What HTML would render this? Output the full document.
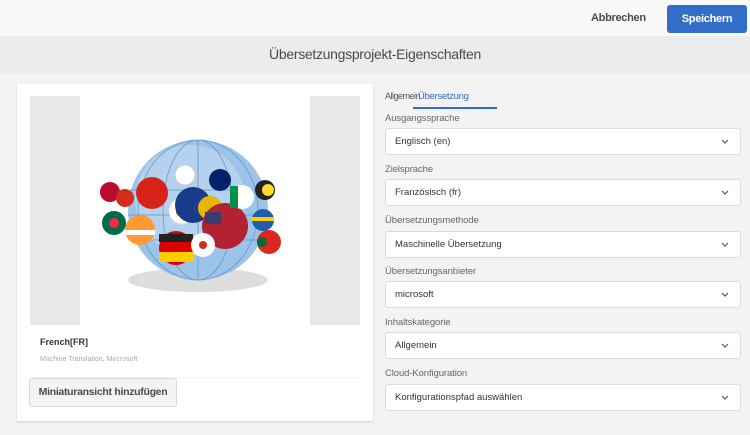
<!DOCTYPE html>
<html><head><meta charset="utf-8"><style>
*{box-sizing:border-box;margin:0;padding:0}
body{width:750px;height:435px;overflow:hidden;background:#f3f3f3;font-family:"Liberation Sans",sans-serif;position:relative}
.top{position:absolute;left:0;top:0;width:750px;height:36px;background:#f9f9f9}
.cancel{position:absolute;left:591px;top:12px;font-size:11px;color:#4b4b4b;font-weight:bold;letter-spacing:-0.3px}
.save{position:absolute;left:667px;top:5px;width:80px;height:28px;background:#326ec8;border-radius:3px;color:#fff;font-size:11px;font-weight:bold;text-align:center;line-height:28px;letter-spacing:-0.3px}
.title{position:absolute;left:0;top:36px;width:750px;height:37px;background:#ececec;text-align:center;line-height:37px;font-size:14px;color:#4b4b4b;letter-spacing:-0.3px}
.card{position:absolute;left:17px;top:84px;width:356px;height:337px;background:#fff;box-shadow:0 1px 2px rgba(0,0,0,.15)}
.img{position:absolute;left:30px;top:96px;width:330px;height:229px;background:#e8e8e8}
.imgw{position:absolute;left:80px;top:96px;width:230px;height:229px;background:#fff}
.info{position:absolute;left:30px;top:325px;width:330px;height:52px;background:#fff;box-shadow:0 1px 1px rgba(0,0,0,.06)}
.fr{position:absolute;left:40px;top:337px;font-size:9px;font-weight:bold;color:#333}
.mt{position:absolute;left:40px;top:356px;font-size:7px;color:#aaa}
.btn{position:absolute;left:29px;top:378px;width:148px;height:29px;background:#f4f4f4;border:1px solid #d8d8d8;border-radius:3px;font-size:10.5px;font-weight:bold;color:#4b4b4b;line-height:27px;text-align:center;letter-spacing:-0.3px}
.tab{position:absolute;top:91px;font-size:9.5px;color:#555;white-space:nowrap}
.ul{position:absolute;left:413px;top:107px;width:84px;height:2px;background:#326ec8}
.lbl{position:absolute;left:385px;font-size:9.5px;color:#666;letter-spacing:-0.1px}
.sel{position:absolute;left:385px;width:356px;height:27px;background:#fff;border:1px solid #dcdcdc;border-radius:3px;font-size:9.5px;color:#333;padding-left:9px;line-height:26px}
.sel svg{position:absolute;right:11px;top:10px}
</style></head><body>
<div class="top"><div class="cancel">Abbrechen</div><div class="save">Speichern</div></div>
<div class="title">Übersetzungsprojekt-Eigenschaften</div>
<div class="card"></div>
<div class="img"></div><div class="imgw"></div>
<svg style="position:absolute;left:80px;top:130px" width="230" height="180" viewBox="0 0 230 180">
<ellipse cx="118" cy="150" rx="70" ry="12" fill="#ddd"/>
<circle cx="118" cy="80" r="70" fill="#9cc4e8"/>
<circle cx="110" cy="70" r="55" fill="#c5dcf0" opacity=".6"/>
<g stroke="#5d8fc4" stroke-width="1" fill="none" opacity=".7">
<ellipse cx="118" cy="80" rx="35" ry="70"/><ellipse cx="118" cy="80" rx="60" ry="70"/><line x1="118" y1="10" x2="118" y2="150"/>
<line x1="50" y1="60" x2="186" y2="60"/><line x1="48" y1="85" x2="188" y2="85"/><line x1="55" y1="110" x2="180" y2="110"/>
</g>
<circle cx="72" cy="63" r="16" fill="#d62318"/>
<circle cx="102" cy="81" r="13" fill="#fff" stroke="#ddd"/><circle cx="102" cy="81" r="6" fill="#c8102e"/>
<circle cx="113" cy="75" r="18" fill="#1a3a8a"/>
<circle cx="130" cy="78" r="12" fill="#e6b800"/>
<circle cx="145" cy="96" r="23" fill="#b22234"/><rect x="125" y="82" width="16" height="12" fill="#3c3b6e"/>
<circle cx="60" cy="100" r="15" fill="#ff9933"/><rect x="45" y="100" width="30" height="5" fill="#fff"/>
<circle cx="96" cy="118" r="17" fill="#dd0000"/><rect x="79" y="104" width="34" height="8" fill="#222"/><rect x="79" y="122" width="34" height="10" fill="#ffce00"/>
<circle cx="123" cy="115" r="12" fill="#fff"/><circle cx="123" cy="115" r="4" fill="#d52b1e"/>
<circle cx="162" cy="67" r="12" fill="#fff"/><rect x="150" y="56" width="8" height="22" fill="#009246"/>
<circle cx="183" cy="90" r="11" fill="#1f5dab"/><rect x="172" y="87" width="22" height="4" fill="#fecc00"/>
<circle cx="189" cy="112" r="12" fill="#da291c"/><circle cx="182" cy="112" r="5" fill="#046a38"/>
<circle cx="185" cy="60" r="10" fill="#222"/><circle cx="188" cy="60" r="6" fill="#fdda24"/>
<circle cx="30" cy="62" r="10" fill="#ba0c2f"/><circle cx="45" cy="68" r="9" fill="#d52b1e"/>
<circle cx="34" cy="93" r="12" fill="#006a4e"/><circle cx="34" cy="93" r="5" fill="#f42a41"/>
<circle cx="140" cy="50" r="11" fill="#012169"/><circle cx="105" cy="45" r="10" fill="#fff" stroke="#ccc"/>
</svg>
<div class="info"></div>
<div class="fr">French[FR]</div>
<div class="mt">Machine Translation, Mircrosoft</div>
<div class="btn">Miniaturansicht hinzufügen</div>
<div class="tab" style="left:385px;font-size:9px;letter-spacing:-0.5px">Allgemein</div>
<div class="tab" style="left:418px;color:#326ec8;letter-spacing:-0.3px">Übersetzung</div>
<div class="ul"></div>
<div class="lbl" style="top:113px">Ausgangssprache</div>
<div class="sel" style="top:128px">Englisch (en)<svg width="8" height="5"><path d="M1 1l3 3 3-3" stroke="#555" fill="none" stroke-width="1.2"/></svg></div>
<div class="lbl" style="top:164px">Zielsprache</div>
<div class="sel" style="top:179px">Französisch (fr)<svg width="8" height="5"><path d="M1 1l3 3 3-3" stroke="#555" fill="none" stroke-width="1.2"/></svg></div>
<div class="lbl" style="top:215px">Übersetzungsmethode</div>
<div class="sel" style="top:231px">Maschinelle Übersetzung<svg width="8" height="5"><path d="M1 1l3 3 3-3" stroke="#555" fill="none" stroke-width="1.2"/></svg></div>
<div class="lbl" style="top:266px">Übersetzungsanbieter</div>
<div class="sel" style="top:281px">microsoft<svg width="8" height="5"><path d="M1 1l3 3 3-3" stroke="#555" fill="none" stroke-width="1.2"/></svg></div>
<div class="lbl" style="top:317px">Inhaltskategorie</div>
<div class="sel" style="top:332px">Allgemein<svg width="8" height="5"><path d="M1 1l3 3 3-3" stroke="#555" fill="none" stroke-width="1.2"/></svg></div>
<div class="lbl" style="top:368px">Cloud-Konfiguration</div>
<div class="sel" style="top:384px">Konfigurationspfad auswählen<svg width="8" height="5"><path d="M1 1l3 3 3-3" stroke="#555" fill="none" stroke-width="1.2"/></svg></div>
</body></html>
